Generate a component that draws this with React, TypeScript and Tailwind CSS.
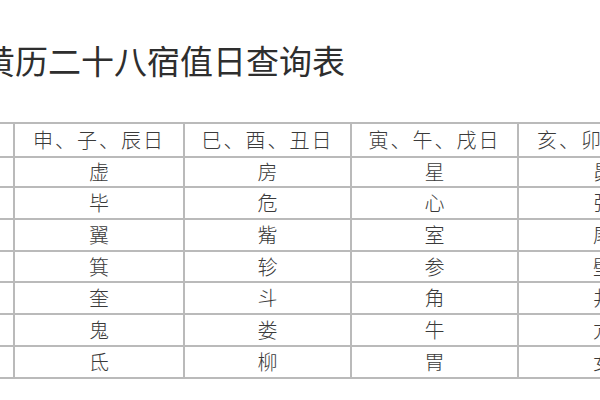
import React from "react";

const header = ["星期", "申、子、辰日", "巳、酉、丑日", "寅、午、戌日", "亥、卯、未日"];
const rows: string[][] = [
  ["星期日", "虚", "房", "星", "昴"],
  ["星期一", "毕", "危", "心", "张"],
  ["星期二", "翼", "觜", "室", "尾"],
  ["星期三", "箕", "轸", "参", "壁"],
  ["星期四", "奎", "斗", "角", "井"],
  ["星期五", "鬼", "娄", "牛", "亢"],
  ["星期六", "氐", "柳", "胃", "女"],
];
const widths = ["w-[172px]", "w-[170px]", "w-[167px]", "w-[167px]", "w-[168px]"];
const rowH = ["h-[30px]", "h-[32px]", "h-[32px]", "h-[31px]", "h-[32px]", "h-[32px]", "h-[32px]"];

export default function App() {
  return (
    <div
      className="w-[600px] h-[400px] bg-white overflow-hidden flex flex-col"
      style={{ fontFamily: '"Noto Sans CJK SC", "Noto Sans", sans-serif' }}
    >
      <h1 className="ml-[-18px] mt-[44px] text-[33px] leading-[33px] font-normal text-[#2e2e2e] whitespace-nowrap">
        黄历二十八宿值日查询表
      </h1>
      <div className="ml-[-157px] mt-[45px] w-[844px] border-t-2 border-[#bababa] text-[#3a3a3a] font-light">
        <div className="flex h-[34px] border-b-2 border-[#bababa]">
          {header.map((h, i) => (
            <div
              key={i}
              className={`${widths[i]} shrink-0 flex items-center justify-center text-[20px] tracking-[2px] ${
                i < 4 ? "border-r-2 border-[#bababa]" : ""
              }`}
            >
              {h}
            </div>
          ))}
        </div>
        {rows.map((r, ri) => (
          <div key={ri} className={`flex ${rowH[ri]} border-b-2 border-[#bababa]`}>
            {r.map((c, i) => (
              <div
                key={i}
                className={`${widths[i]} shrink-0 flex items-center justify-center text-[20px] ${
                  i < 4 ? "border-r-2 border-[#bababa]" : ""
                }`}
              >
                {c}
              </div>
            ))}
          </div>
        ))}
      </div>
    </div>
  );
}
